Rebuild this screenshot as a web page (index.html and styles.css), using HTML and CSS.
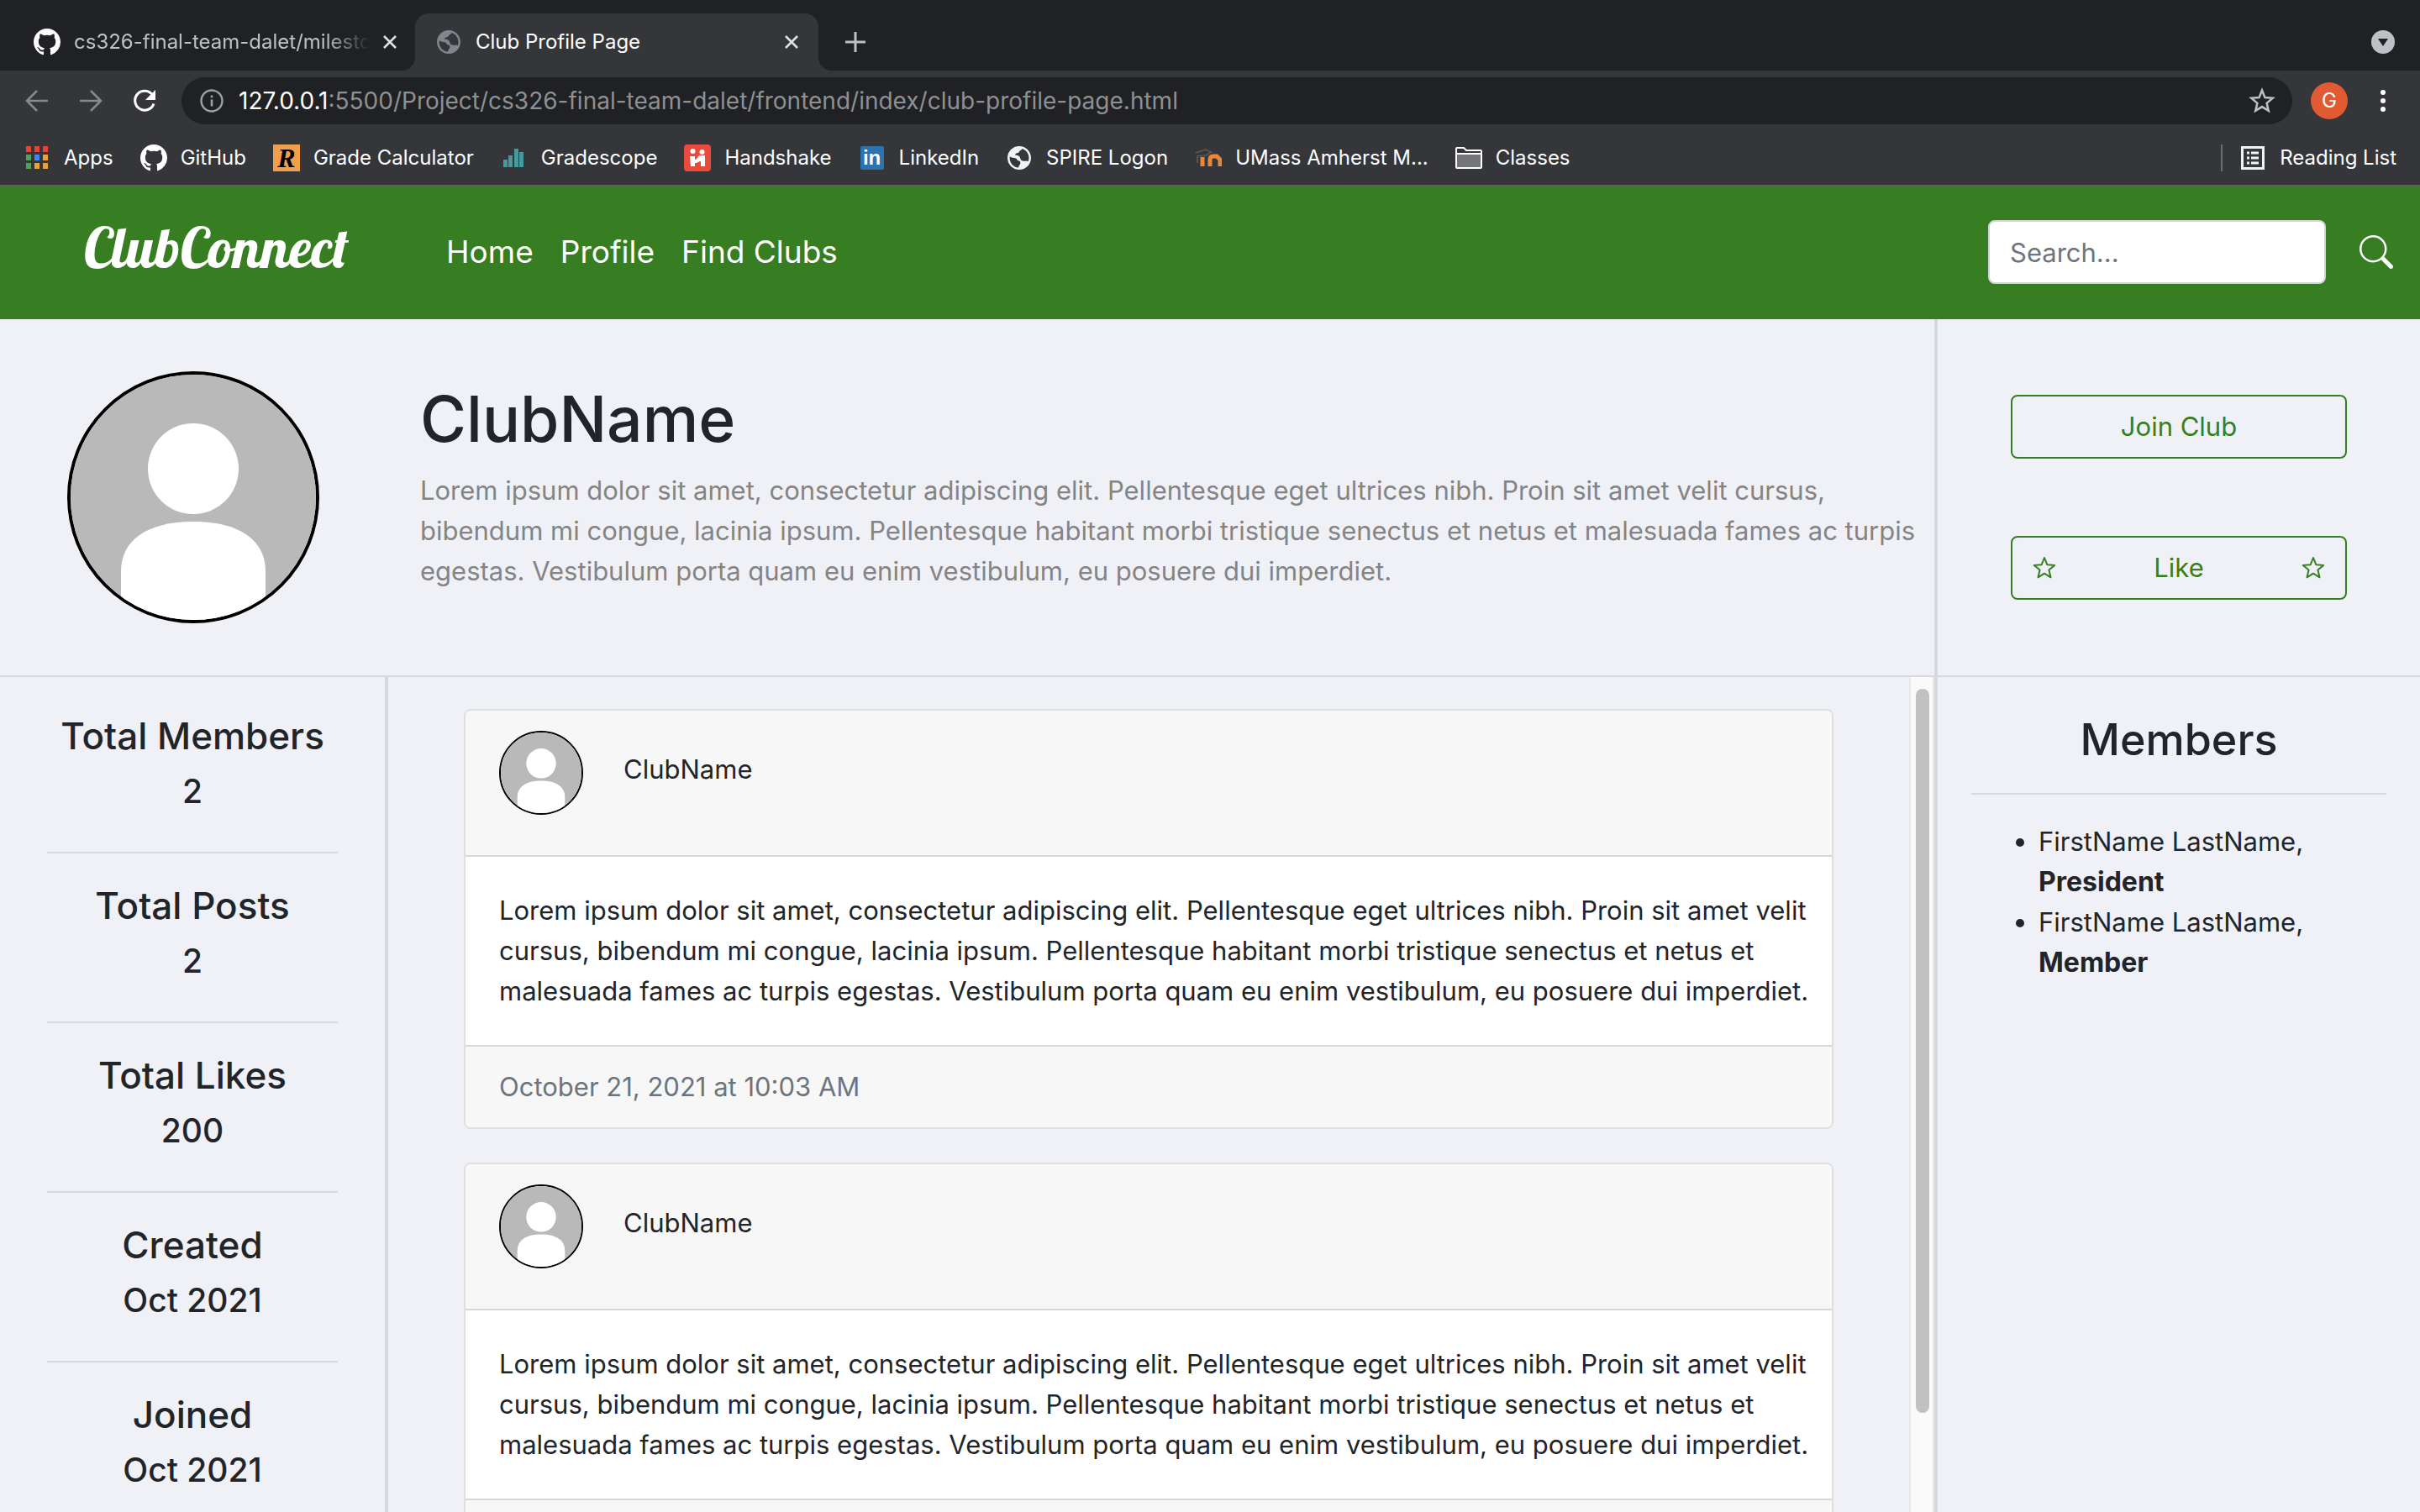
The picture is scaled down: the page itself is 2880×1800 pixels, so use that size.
FILE: index.html
```html
<!DOCTYPE html>
<html lang="en">
<head>
<meta charset="utf-8">
<title>Club Profile Page</title>
<link rel="stylesheet" href="styles.css">
</head>
<body>
<svg class="sprite" aria-hidden="true">
  <symbol id="github" viewBox="0 0 16 16"><path fill="currentColor" d="M8 0C3.58 0 0 3.58 0 8c0 3.54 2.29 6.53 5.47 7.59.4.07.55-.17.55-.38 0-.19-.01-.82-.01-1.49-2.01.37-2.53-.49-2.69-.94-.09-.23-.48-.94-.82-1.13-.28-.15-.68-.52-.01-.53.63-.01 1.08.58 1.23.82.72 1.21 1.87.87 2.33.66.07-.52.28-.87.51-1.07-1.78-.2-3.64-.89-3.64-3.95 0-.87.31-1.59.82-2.15-.08-.2-.36-1.02.08-2.12 0 0 .67-.21 2.2.82.64-.18 1.32-.27 2-.27.68 0 1.36.09 2 .27 1.53-1.04 2.2-.82 2.2-.82.44 1.1.16 1.92.08 2.12.51.56.82 1.27.82 2.15 0 3.07-1.87 3.75-3.65 3.95.29.25.54.73.54 1.48 0 1.07-.01 1.93-.01 2.2 0 .21.15.46.55.38A8.012 8.012 0 0 0 16 8c0-4.42-3.58-8-8-8z"/></symbol>
  <symbol id="globe" viewBox="2 2 20 20"><path fill="currentColor" d="M12 2C6.48 2 2 6.48 2 12s4.48 10 10 10 10-4.48 10-10S17.52 2 12 2zm-.6 18.200c-4.400-.4-7.500-3.900-7.500-8.100l.1-1.300c1.500 1.300 3.300 1.200 4.600 1.300 1.600.2 1.300 1.900 2.800 2.300 1.500.3 1.600 1.300 1.500 2.500-.1 1-1.500 1.300-1.500 3.300zM13 12.800c-.2-2-1.500-3.200-4.500-3.100.3-1.600 1.300-1.700 2.500-1.900 1-.2.800-1.500 1.800-2 .8-.4 1.600-.8 1.700-1.600 3.400 1.100 5.700 4.200 5.700 7.800 0 1.100-.2 2.100-.6 3-1-.9-1.700-.3-2.700-.3-1.800.1-3.700 0-3.900-1.900z"/></symbol>
  <symbol id="close" viewBox="0 0 16 16"><path d="M1 1l14 14M15 1L1 15" stroke="currentColor" stroke-width="2.600"/></symbol>
  <symbol id="star" viewBox="0 0 28 28"><path fill="none" stroke="currentColor" stroke-width="2" stroke-linejoin="round" d="M14 2l3.300 8.200 8.900.7-6.800 5.700 2.100 8.700L14 20.700l-7.500 4.600 2.100-8.700L1.800 10.900l8.900-.7z"/></symbol>
  <symbol id="person" viewBox="0 0 292 292"><path fill="#b9b9b9" d="M0 0h292v292H0z"/><circle cx="146" cy="112" r="54" fill="#fff"/><path fill="#fff" d="M60 292V234C60 198 90 175 146 175S232 198 232 234V292z"/></symbol>
</svg>

<header class="browser">
  <div class="tabs">
    <div class="tab">
      <svg class="icon-32 white"><use href="#github"/></svg>
      <span class="tab-title faded">cs326-final-team-dalet/milestone</span>
      <button class="plain" aria-label="Close tab"><svg class="icon-16"><use href="#close"/></svg></button>
    </div>
    <div class="tab active">
      <svg class="icon-28 globe"><use href="#globe"/></svg>
      <span class="tab-title">Club Profile Page</span>
      <button class="plain" aria-label="Close tab"><svg class="icon-16"><use href="#close"/></svg></button>
    </div>
    <button class="plain new-tab" aria-label="New tab"><svg class="icon-24" viewBox="0 0 24 24"><path d="M12 0v24M0 12h24" stroke="#bdc1c6" stroke-width="3"/></svg></button>
    <button class="plain tab-menu" aria-label="Tab search"><svg class="icon-28" viewBox="0 0 28 28"><circle cx="14" cy="14" r="14" fill="#bdc1c6"/><path d="M8 10h12l-6 9z" fill="#202124"/></svg></button>
  </div>
  <div class="toolbar">
    <button class="plain dim" aria-label="Back"><svg class="icon-28" viewBox="0 0 28 28"><path d="M27 14H3M14 2L2 14l12 12" fill="none" stroke="currentColor" stroke-width="2.600"/></svg></button>
    <button class="plain dim" aria-label="Forward"><svg class="icon-28" viewBox="0 0 28 28"><path d="M1 14h24M14 2l12 12-12 12" fill="none" stroke="currentColor" stroke-width="2.600"/></svg></button>
    <button class="plain white" aria-label="Reload"><svg class="icon-28" viewBox="0 0 28 28"><path d="M23.500 7A11.500 11.500 0 1 0 25 17.500" fill="none" stroke="currentColor" stroke-width="3"/><path d="M27 1v12H15z" fill="currentColor"/></svg></button>
    <div class="address">
      <svg class="icon-28" viewBox="0 0 28 28"><circle cx="14" cy="14" r="12.500" fill="none" stroke="#9aa0a6" stroke-width="2.400"/><path d="M14 12.500v8M14 7.500v2.800" stroke="#9aa0a6" stroke-width="2.600"/></svg>
      <span class="url"><span class="white">127.0.0.1</span>:5500/Project/cs326-final-team-dalet/frontend/index/club-profile-page.html</span>
      <button class="plain bookmark" aria-label="Bookmark this page"><svg class="icon-32" viewBox="0 0 28 28"><path fill="none" stroke="#bdc1c6" stroke-width="2.200" d="M14 3l3 7.600 8.100.6-6.200 5.300 1.900 7.900-6.800-4.200-6.800 4.200 1.900-7.900-6.200-5.300 8.100-.6z"/></svg></button>
    </div>
    <button class="account">G</button>
    <button class="plain white" aria-label="Menu"><svg class="icon-28" viewBox="0 0 28 28"><g fill="currentColor"><circle cx="14" cy="4" r="3"/><circle cx="14" cy="14" r="3"/><circle cx="14" cy="24" r="3"/></g></svg></button>
  </div>
  <nav class="bookmarks" aria-label="Bookmarks">
    <a href="#"><svg class="icon-32" viewBox="0 0 32 32"><g fill="#ea4335"><path d="M3 2h6v7H3zM13 2h6v7h-6zM23 2h6v7h-6z"/></g><path fill="#55a15b" d="M3 12h6v7H3zM3 22h6v7H3z"/><path fill="#4285f4" d="M13 12h6v7h-6z"/><path fill="#e8a33a" d="M23 12h6v7h-6zM13 22h6v7h-6zM23 22h6v7h-6z"/></svg>Apps</a>
    <a href="#"><svg class="icon-32"><use href="#github"/></svg>GitHub</a>
    <a href="#"><span class="badge badge-r">R</span>Grade Calculator</a>
    <a href="#"><svg class="icon-32" viewBox="0 0 32 32"><path fill="#459a9c" d="M3 18h5v9H3zM9 13h5v14H9zM16 5h5v22h-5zM22 9h5v18h-5z"/></svg>Gradescope</a>
    <a href="#"><svg class="icon-32" viewBox="0 0 32 32"><rect width="32" height="32" rx="4" fill="#e94b3c"/><g fill="#fff"><circle cx="10.500" cy="8" r="3"/><circle cx="21.500" cy="9" r="3"/><path d="M7 14h6v4c3 0 3-5 7-5h5v13h-5v-6c-3 0-3 2-7 2v4H8z"/></g></svg>Handshake</a>
    <a href="#"><span class="badge badge-in">in</span>LinkedIn</a>
    <a href="#"><svg class="icon-28 bookmark-globe"><use href="#globe"/></svg>SPIRE Logon</a>
    <a href="#"><svg class="icon-32" viewBox="0 0 32 32"><path d="M9 26V15M18 26v-8q0-4 4-4t4 0 4 4v8" fill="none" stroke="#e8873a" stroke-width="5"/><path d="M1 10l12-4 6 3-6 4-10 1v8" fill="none" stroke="#5b514d" stroke-width="2"/></svg>UMass Amherst M...</a>
    <a href="#"><svg class="icon-32" viewBox="0 0 32 32"><path d="M1 5q0-1 1-1h8l3 3h17q1 0 1 1v19q0 1-1 1H2q-1 0-1-1z" fill="#35363a" stroke="#fff" stroke-width="2"/><path d="M2 12h28v15H2z" fill="#747578"/><path d="M1 11h30" stroke="#fff" stroke-width="2"/></svg>Classes</a>
    <a class="reading" href="#"><svg class="icon-32" viewBox="0 0 32 32"><path d="M3.500 3.500h25v25h-25z" fill="none" stroke="#f1f3f4" stroke-width="3"/><path d="M9 10h3m2 0h9M9 16h3m2 0h9M9 22h3m2 0h9" stroke="#f1f3f4" stroke-width="3"/></svg>Reading List</a>
  </nav>
</header>

<nav class="site-nav">
  <a class="brand" href="#">ClubConnect</a>
  <div class="links"><a href="#">Home</a><a href="#">Profile</a><a href="#">Find Clubs</a></div>
  <form class="search">
    <input type="search" placeholder="Search..." aria-label="Search clubs">
    <button class="plain white" type="button" aria-label="Search"><svg class="icon-40" viewBox="0 0 16 16"><path fill="currentColor" d="M11.742 10.344a6.500 6.500 0 1 0-1.397 1.398h-.001c.03.04.062.078.098.115l3.850 3.850a1 1 0 0 0 1.415-1.414l-3.850-3.850a1.007 1.007 0 0 0-.115-.1zM12 6.500a5.500 5.500 0 1 1-11 0 5.500 5.500 0 0 1 11 0z"/></svg></button>
  </form>
</nav>

<main class="page">
  <section class="profile">
    <svg class="avatar avatar-lg" role="img" aria-label="Club picture"><use href="#person"/></svg>
    <div class="about">
      <h1>ClubName</h1>
      <p>Lorem ipsum dolor sit amet, consectetur adipiscing elit. Pellentesque eget ultrices nibh. Proin sit amet velit cursus, bibendum mi congue, lacinia ipsum. Pellentesque habitant morbi tristique senectus et netus et malesuada fames ac turpis egestas. Vestibulum porta quam eu enim vestibulum, eu posuere dui imperdiet.</p>
    </div>
  </section>
  <section class="actions">
    <button class="btn">Join Club</button>
    <button class="btn btn-like"><svg class="icon-28"><use href="#star"/></svg>Like<svg class="icon-28"><use href="#star"/></svg></button>
  </section>
  <aside class="stats">
    <div class="stat"><h4>Total Members</h4><h5>2</h5></div>
    <div class="stat"><h4>Total Posts</h4><h5>2</h5></div>
    <div class="stat"><h4>Total Likes</h4><h5>200</h5></div>
    <div class="stat"><h4>Created</h4><h5>Oct 2021</h5></div>
    <div class="stat"><h4>Joined</h4><h5>Oct 2021</h5></div>
  </aside>
  <section class="feed">
    <div class="posts">
      <article class="card">
        <header class="card-head"><svg class="avatar avatar-sm" role="img" aria-label="Club picture"><use href="#person"/></svg><span>ClubName</span></header>
        <p class="card-body">Lorem ipsum dolor sit amet, consectetur adipiscing elit. Pellentesque eget ultrices nibh. Proin sit amet velit cursus, bibendum mi congue, lacinia ipsum. Pellentesque habitant morbi tristique senectus et netus et malesuada fames ac turpis egestas. Vestibulum porta quam eu enim vestibulum, eu posuere dui imperdiet.</p>
        <footer class="card-foot">October 21, 2021 at 10:03 AM</footer>
      </article>
      <article class="card">
        <header class="card-head"><svg class="avatar avatar-sm" role="img" aria-label="Club picture"><use href="#person"/></svg><span>ClubName</span></header>
        <p class="card-body">Lorem ipsum dolor sit amet, consectetur adipiscing elit. Pellentesque eget ultrices nibh. Proin sit amet velit cursus, bibendum mi congue, lacinia ipsum. Pellentesque habitant morbi tristique senectus et netus et malesuada fames ac turpis egestas. Vestibulum porta quam eu enim vestibulum, eu posuere dui imperdiet.</p>
        <footer class="card-foot"></footer>
      </article>
    </div>
    <div class="track"><div class="thumb"></div></div>
  </section>
  <aside class="members">
    <h2>Members</h2>
    <ul>
      <li>FirstName LastName, <strong>President</strong></li>
      <li>FirstName LastName, <strong>Member</strong></li>
    </ul>
  </aside>
</main>
</body>
</html>
```
FILE: styles.css
```css
* { box-sizing: border-box; }
body {
  margin: 0;
  height: 100vh;
  overflow: hidden;
  display: flex;
  flex-direction: column;
  background: #f0f1f6;
  color: #212529;
  font: 31px/48px Inter, "Liberation Sans", sans-serif;
}
h1, h2, h4, h5, p, ul { margin: 0; font-weight: 500; }
p, ul { font-weight: 400; }
a { color: inherit; text-decoration: none; }
svg { display: block; flex: none; }
.sprite { position: absolute; width: 0; height: 0; }
.plain { display: flex; padding: 0; border: 0; background: none; color: inherit; }
.icon-16 { width: 16px; height: 16px; }
.icon-24 { width: 24px; height: 24px; }
.icon-28 { width: 28px; height: 28px; }
.icon-32 { width: 32px; height: 32px; }
.icon-40 { width: 40px; height: 40px; }
.white { color: #fff; }
.dim { color: #87888a; }

/* Browser window */
.browser { flex: none; background: #35363a; border-bottom: 2px solid #5f5c63; font-size: 24px; line-height: 32px; }
.tabs { display: flex; align-items: flex-end; height: 84px; padding-left: 14px; background: #202124; color: #bdc1c6; }
.tab { display: flex; align-items: center; gap: 16px; width: 480px; height: 68px; padding: 0 22px 0 26px; }
.tab .plain { color: #dfe1e5; }
.tab-title { flex: 1; overflow: hidden; white-space: nowrap; }
.faded { -webkit-mask-image: linear-gradient(to right, #000 85%, transparent); mask-image: linear-gradient(to right, #000 85%, transparent); }
.tab.active { position: relative; gap: 18px; padding-right: 24px; background: #35363a; border-radius: 16px 16px 0 0; color: #fff; }
.tab.active::before, .tab.active::after { content: ""; position: absolute; bottom: 0; width: 16px; height: 16px; }
.tab.active::before { right: 100%; background: radial-gradient(circle at 0 0, transparent 16px, #35363a 16px); }
.tab.active::after { left: 100%; background: radial-gradient(circle at 100% 0, transparent 16px, #35363a 16px); }
.globe { color: #80868b; }
.new-tab { margin: 0 auto 22px 32px; }
.tab-menu { margin: 0 30px 20px 0; }
.toolbar { display: flex; align-items: center; gap: 36px; height: 72px; padding: 0 30px; }
.address { flex: 1; display: flex; align-items: center; gap: 18px; height: 56px; margin: 0 -14px 0 -6px; padding: 0 20px 0 22px; border-radius: 28px; background: #202124; color: #8f9092; font-size: 28px; }
.bookmark { margin-left: auto; }
.account { width: 44px; height: 44px; padding: 0; border: 0; border-radius: 50%; background: #e25a32; color: #fff; font: 24px/44px Inter, sans-serif; }
.toolbar > .plain:last-child { margin-left: -8px; }
.bookmarks { display: flex; align-items: center; gap: 32px; height: 64px; padding: 0 28px; color: #fff; }
.bookmarks a { display: flex; align-items: center; gap: 16px; }
.badge { width: 32px; height: 32px; text-align: center; color: #fff; }
.badge-r { background: #f19f4d; color: #000; font: italic bold 32px/32px "Liberation Serif", serif; }
.badge-in { width: 28px; height: 28px; margin: 0 2px; border-radius: 2px; background: #2a72b0; font: bold 24px/28px "Liberation Sans", sans-serif; }
.bookmark-globe { margin: 0 2px; color: #f1f3f4; }
.bookmarks .reading { margin-left: auto; padding-left: 20px; border-left: 2px solid #6b6c6f; }

/* Site navigation */
.site-nav { flex: none; display: flex; align-items: center; height: 158px; padding: 0 32px 2px 100px; background: #377e22; color: #fff; }
.brand { padding-bottom: 12px; font: 67px/80px Lobster, "Liberation Serif", serif; }
.links { display: flex; gap: 32px; margin-left: 116px; font-size: 37px; line-height: 60px; }
.search { display: flex; align-items: center; gap: 40px; margin-left: auto; }
.search input { width: 402px; height: 76px; padding: 0 24px; border: 2px solid #ced4da; border-radius: 8px; background: #fff; color: #212529; font: inherit; }
.search input::placeholder { color: #6c757d; opacity: 1; }

/* Club page */
.page { flex: 1; min-height: 0; display: grid; grid-template: auto minmax(0, 1fr) / 462px minmax(0, 1fr) 578px; }
.profile { grid-column: span 2; display: flex; padding: 62px 16px 62px 80px; border-bottom: 2px solid #d7d9dd; }
.avatar { border: 4px solid #000; border-radius: 50%; }
.avatar-lg { width: 300px; height: 300px; }
.about { flex: 1; padding: 6px 0 0 120px; }
h1 { font-size: 75px; line-height: 102px; margin-bottom: 10px; }
.about p { color: #848485; }
.actions { display: flex; flex-direction: column; justify-content: center; align-items: center; gap: 92px; border-left: 4px solid #d7d9dd; border-bottom: 2px solid #d7d9dd; }
.btn { width: 400px; height: 76px; padding: 0 24px; border: 2px solid #377e22; border-radius: 8px; background: none; color: #377e22; font: inherit; }
.btn-like { display: flex; align-items: center; justify-content: space-between; }
.stats { overflow: hidden; padding: 40px 56px 0; border-right: 4px solid #d7d9dd; text-align: center; }
.stat { padding-bottom: 48px; margin-bottom: 32px; border-bottom: 2px solid #d7d9dd; }
h4 { margin-bottom: 12px; font-size: 44px; line-height: 60px; }
h5 { font-size: 39px; line-height: 48px; }
.feed { display: flex; overflow: hidden; }
.posts { flex: 1; display: flex; flex-direction: column; gap: 40px; padding: 38px 90px 0; }
.card { flex: none; border: 2px solid #dedfe1; border-radius: 8px; background: #fff; overflow: hidden; }
.card-head { display: flex; gap: 48px; height: 174px; padding: 24px 40px; background: #f7f7f7; border-bottom: 2px solid #d7d7d8; }
.card-head span { padding-top: 22px; }
.avatar-sm { width: 100px; height: 100px; border-width: 2px; }
.card-body { padding: 40px 24px 40px 40px; }
.card-foot { min-height: 98px; padding: 24px 40px; background: #f7f7f7; border-top: 2px solid #d7d7d8; color: #6c757d; }
.track { width: 30px; padding: 14px 4px 0 6px; background: #fafafa; border: solid #e8e8e8; border-width: 0 2px; }
.thumb { width: 16px; height: 88%; border-radius: 8px; background: #c1c1c1; }
.members { padding: 40px; border-left: 4px solid #d7d9dd; }
h2 { padding-bottom: 28px; margin-bottom: 32px; border-bottom: 2px solid #d7d9dd; font-size: 52px; line-height: 70px; text-align: center; }
.members ul { padding: 0 40px 0 80px; }
.members strong { font-size: 32px; font-weight: 700; }
```
